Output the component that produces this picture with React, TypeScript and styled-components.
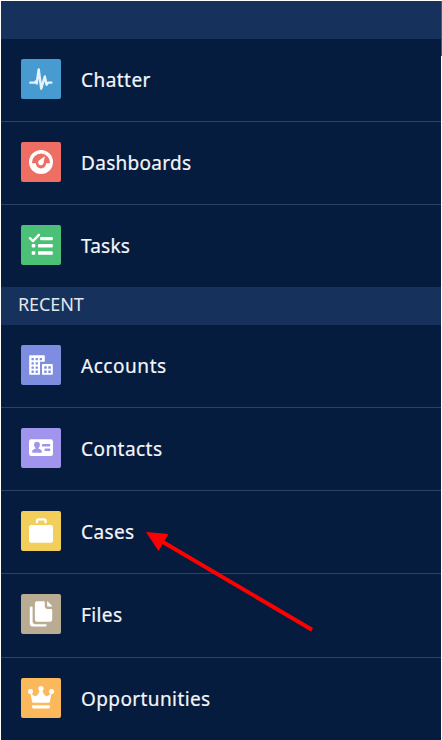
import React from "react";
import styled, { createGlobalStyle } from "styled-components";

const GlobalStyle = createGlobalStyle`
  body { margin: 0; background: #fff; }
  * { box-sizing: border-box; }
`;

const Page = styled.div`
  position: relative;
  width: 442px;
  height: 740px;
  overflow: hidden;
  padding: 1px 0 0 1px;
  display: flex;
  background: #fff;
`;

const Menu = styled.nav`
  width: 440px;
  height: 739px;
  background: #061c3f;
  font-family: "Noto Sans", sans-serif;
`;

const Edge = styled.div`
  width: 1px;
  height: 55px;
  background: #0b6cb5;
`;

const SectionBar = styled.div`
  height: 38px;
  padding-left: 17px;
  background: #16325c;
  color: #e4e6e9;
  font-size: 18px;
  line-height: 35px;
  letter-spacing: -0.1px;
`;

const List = styled.ul`
  list-style: none;
  margin: 0;
  padding: 0;
`;

const Item = styled.li<{ $height: number; $last: boolean }>`
  display: flex;
  align-items: flex-start;
  gap: 20px;
  height: ${(p) => p.$height}px;
  padding: 20px 0 0 20px;
  border-bottom: ${(p) => (p.$last ? "none" : "1px solid #2b4267")};
`;

const IconTile = styled.span<{ $color: string }>`
  width: 40px;
  height: 40px;
  border-radius: 2px;
  background: ${(p) => p.$color};
  svg { display: block; }
`;

const Label = styled.span<{ $spacing: number }>`
  color: #f4f6f9;
  font-size: 19px;
  line-height: 43px;
  white-space: nowrap;
  letter-spacing: ${(p) => p.$spacing}px;
  -webkit-text-stroke: 0.2px #f4f6f9;
`;

const Pointer = styled.svg`
  position: absolute;
  left: 140px;
  top: 525px;
`;

const icons: Record<string, React.ReactNode> = {
  Chatter: (
    <path d="M9.3 23.6h4.4l1-1.2 1 2.2L17.7 10.5l2.5 19.2 3.6-12.2 1.8 8.2 1.5-2.1h3.3" fill="none" stroke="#e6f2fb" strokeWidth="2.4" strokeLinecap="round" strokeLinejoin="round" />
  ),
  Dashboards: (
    <>
      <circle cx="20" cy="20" r="12" fill="#fff" />
      <path d="M11 20.6a9 9 0 0 1 18 0c0 .4-.3.7-.7.7h-3.2a5 5 0 0 1-10.2 0h-3.2c-.4 0-.7-.3-.7-.7z" fill="#ef6e64" />
      <path d="M23.8 14.2 22.7 20.6a2.8 2.8 0 1 1-5-1.8z" fill="#fff" />
    </>
  ),
  Tasks: (
    <>
      <path d="m9 13.2 2.9 2.9 6-6.3" fill="none" stroke="#fff" strokeWidth="2.4" strokeLinecap="round" strokeLinejoin="round" />
      <g fill="#fff">
        <rect x="19.2" y="12" width="12.6" height="3.2" rx=".8" />
        <rect x="10.7" y="19" width="3.6" height="3.6" rx=".8" />
        <rect x="17" y="19" width="14.8" height="3.6" rx=".8" />
        <rect x="10.7" y="26.2" width="3.6" height="3.6" rx=".8" />
        <rect x="17" y="26.2" width="14.8" height="3.6" rx=".8" />
      </g>
    </>
  ),
  Accounts: (
    <>
      <path d="M9 10.2h14q.8 0 .8.8v5q0 .8-.8.8h-4V29q0 .8-.8.8H9q-.8 0-.8-.8V11q0-.8.8-.8zM21.8 19H31q.8 0 .8.8V29q0 .8-.8.8h-9.2q-.8 0-.8-.8v-9.2q0-.8.8-.8z" fill="#fff" />
      <g fill="#7f8de1">
        {[13, 17.2, 21.4, 25.6].flatMap((y) =>
          [10.5, 14.6].map((x) => <rect key={`${x}-${y}`} x={x} y={y} width="2.3" height="2.3" rx=".3" />)
        )}
        <rect x="18.7" y="13" width="2.3" height="2.3" rx=".3" />
        {[21.2, 25.4].flatMap((y) =>
          [23.2, 27.3].map((x) => <rect key={`${x}-${y}`} x={x} y={y} width="2.5" height="2.5" rx=".3" />)
        )}
      </g>
    </>
  ),
  Contacts: (
    <>
      <rect x="8" y="11.2" width="24" height="16.8" rx="2.2" fill="#fff" />
      <g fill="#a094ed">
        <ellipse cx="16" cy="16.9" rx="2.9" ry="3.1" />
        <path d="M14.7 18h2.6v2.4c2 .8 3.6 1.4 3.6 3.1 0 .9-.4 1.3-1.1 1.3h-7.6c-.7 0-1.1-.4-1.1-1.3 0-1.7 1.6-2.3 3.6-3.1z" />
        <rect x="21" y="16" width="8.2" height="2.5" rx=".6" />
        <rect x="23.6" y="20.6" width="5.6" height="2.5" rx=".6" />
      </g>
    </>
  ),
  Cases: (
    <>
      <path d="M16 11.3V10q0-1.7 1.7-1.7h5.2q1.7 0 1.7 1.7v1.3" fill="none" stroke="#fff" strokeWidth="2.3" strokeLinecap="round" />
      <rect x="8" y="14" width="24" height="17.8" rx="2" fill="#fff" />
    </>
  ),
  Files: (
    <g fill="#fff">
      <path d="M15.8 7.3h7q1 0 1 1v4.3q0 2.4 2.4 2.4h4q1 0 1 1v9.5q0 2.2-2.2 2.2H16.1q-2.2 0-2.2-2.2v-16q0-2.2 1.9-2.2z" />
      <path d="M26.1 7.7v4.1q0 .6.6.6h4q.7 0 .2-.6l-4.2-4.2q-.6-.5-.6.1z" />
      <path d="M9.8 12.5h.8q1 0 1 1v14.3q0 2.4 2.4 2.4h10.7q1 0 1 1 0 1.3-1.8 1.3H11.7q-2.9 0-2.9-2.9V13.5q0-1 1-1z" />
    </g>
  ),
  Opportunities: (
    <g fill="#fff">
      <circle cx="9.5" cy="13.6" r="2.5" />
      <circle cx="20" cy="10.5" r="2.6" />
      <circle cx="30.5" cy="13.6" r="2.5" />
      <path d="M9 13.5 11.2 24q.2.8 1 .8h15.6q.8 0 1-.8L31 13.5q-3 5-5.6 4.6-2.9-.6-4.1-6.1h-2.6q-1.2 5.5-4.1 6.1Q12 18.5 9 13.5z" />
      <path d="M11.9 27.2h16.2q.9 0 .9.9v.6q0 1.9-2 1.9H13q-2 0-2-1.9v-.6q0-.9.9-.9z" />
    </g>
  ),
};

interface Entry {
  name: string;
  color: string;
  height: number;
  spacing: number;
}

const pinned: Entry[] = [
  { name: "Chatter", color: "#489bd0", height: 83, spacing: 0.45 },
  { name: "Dashboards", color: "#ef6e64", height: 83, spacing: 0.3 },
  { name: "Tasks", color: "#4bc076", height: 82, spacing: 0.2 },
];

const recent: Entry[] = [
  { name: "Accounts", color: "#7f8de1", height: 83, spacing: 0.55 },
  { name: "Contacts", color: "#a094ed", height: 83, spacing: 0.45 },
  { name: "Cases", color: "#f2cf5b", height: 83, spacing: 0.4 },
  { name: "Files", color: "#baac93", height: 84, spacing: 0.4 },
  { name: "Opportunities", color: "#fcb95b", height: 82, spacing: 0.4 },
];

const MenuList = ({ entries }: { entries: Entry[] }) => (
  <List>
    {entries.map((e, i) => (
      <Item key={e.name} $height={e.height} $last={i === entries.length - 1}>
        <IconTile $color={e.color}>
          <svg width="40" height="40" viewBox="0 0 40 40">{icons[e.name]}</svg>
        </IconTile>
        <Label $spacing={e.spacing}>{e.name}</Label>
      </Item>
    ))}
  </List>
);

export default function App() {
  return (
    <Page>
      <GlobalStyle />
      <Menu>
        <SectionBar />
        <MenuList entries={pinned} />
        <SectionBar>RECENT</SectionBar>
        <MenuList entries={recent} />
      </Menu>
      <Edge />
      <Pointer width="180" height="115" viewBox="0 0 180 115">
        <path d="M22 16.5 172 104.7" stroke="#f00" strokeWidth="4" />
        <path d="M6 7 28.5 9 18.5 26z" fill="#f00" />
      </Pointer>
    </Page>
  );
}
